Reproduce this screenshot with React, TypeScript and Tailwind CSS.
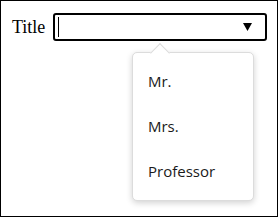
import React from 'react';

const options = ['Mr.', 'Mrs.', 'Professor'];

export default function App() {
  return (
    <div className="relative w-[278px] h-[217px] border border-black bg-white">
      {/* FIELD */}
      <div className="flex items-center gap-2 pl-[11px] pt-3">
        <span className="text-[18px] leading-none text-black" style={{ fontFamily: '"Liberation Serif", serif' }}>
          Title
        </span>
        <div className="relative flex items-center w-[214px] h-[28px] border-2 border-black rounded-[3px] bg-white">
          <div className="ml-[3px] w-px h-[20px] bg-black"></div>
          <svg className="absolute right-[13px] top-[8px]" width="9" height="8" viewBox="0 0 9 8">
            <polygon points="0,0 9,0 4.5,8" fill="#000" />
          </svg>
        </div>
      </div>

      {/* DROPDOWN */}
      <div
        className="absolute left-[131px] top-[51px] w-[122px] h-[149px] bg-white border border-[#dcdcdc] rounded-[5px] shadow-[0_2px_6px_rgba(0,0,0,0.18)] py-[6px]"
        style={{ fontFamily: '"Open Sans", sans-serif' }}
      >
        <div className="absolute left-[20px] top-[-7px] w-[14px] h-[14px] bg-white border-t border-l border-[#dcdcdc] rotate-45"></div>
        {options.map(o => (
          <div key={o} className="relative h-[45px] flex items-center pl-[15px] text-[15px] text-[#1a1a1a]">
            {o}
          </div>
        ))}
      </div>
    </div>
  );
}
